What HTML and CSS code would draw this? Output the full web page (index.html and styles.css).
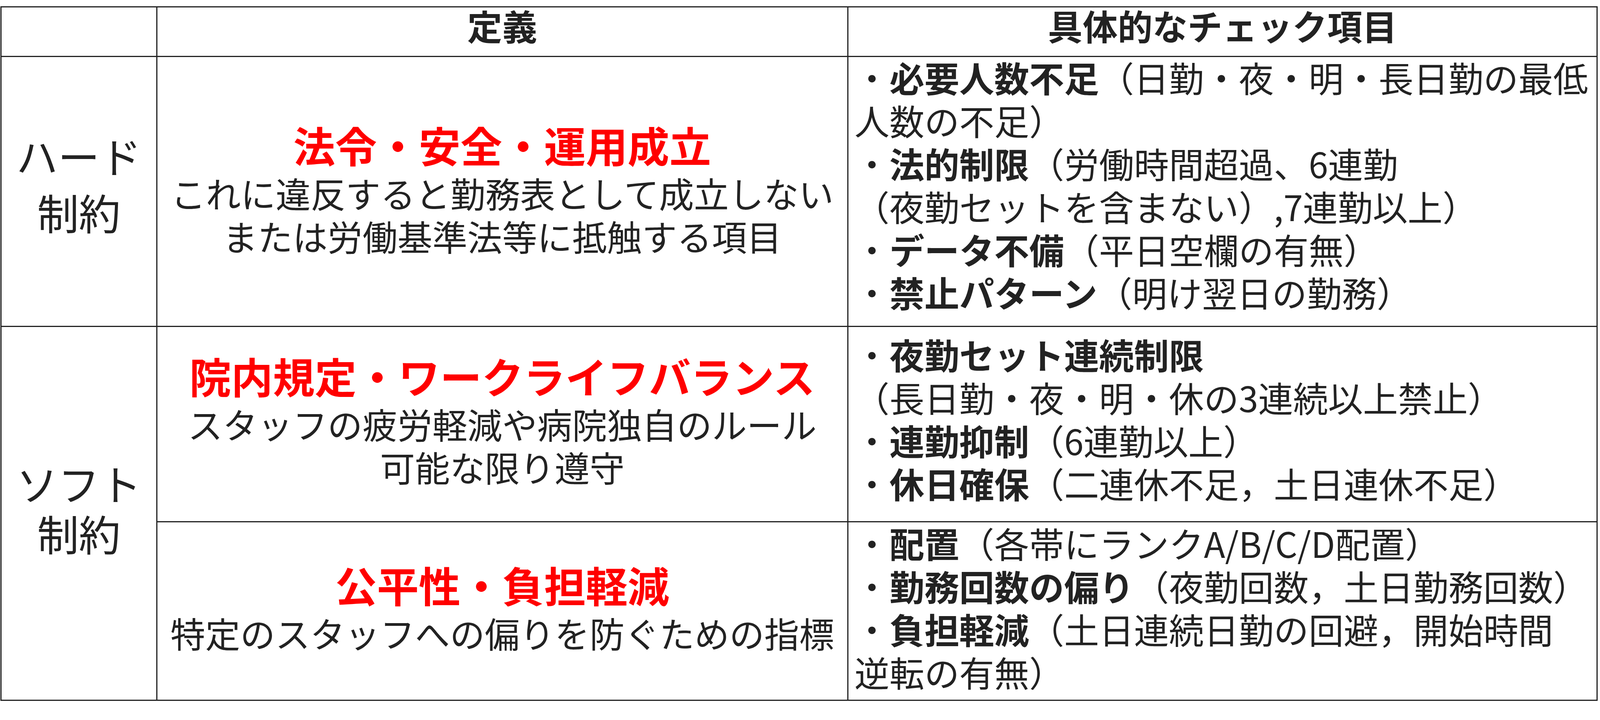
FILE: index.html
```html
<!DOCTYPE html>
<html lang="ja">
<head>
<meta charset="utf-8">
<title>制約一覧</title>
<link rel="stylesheet" href="styles.css">
</head>
<body>
<div class="grid">
  <div class="cell head"></div>
  <div class="cell head center"><span class="hd">定義</span></div>
  <div class="cell head center"><span class="hd">具体的なチェック項目</span></div>

  <div class="cell label hard"><span>ハード</span><span>制約</span></div>
  <div class="cell center def">
    <div class="red">法令・安全・運用成立</div>
    <div class="body">これに違反すると勤務表として成立しない</div>
    <div class="body">または労働基準法等に抵触する項目</div>
  </div>
  <div class="cell list">
    <div class="ln">・<b>必要人数不足</b>（日勤・夜・明・長日勤の最低</div>
    <div class="ln">人数の不足）</div>
    <div class="ln">・<b>法的制限</b>（労働時間超過、6連勤</div>
    <div class="ln">（夜勤セットを含まない）,7連勤以上）</div>
    <div class="ln">・<b>データ不備</b>（平日空欄の有無）</div>
    <div class="ln">・<b>禁止パターン</b>（明け翌日の勤務）</div>
  </div>

  <div class="cell label soft"><span>ソフト</span><span>制約</span></div>
  <div class="cell center def def-soft">
    <div class="red">院内規定・ワークライフバランス</div>
    <div class="body">スタッフの疲労軽減や病院独自のルール</div>
    <div class="body">可能な限り遵守</div>
  </div>
  <div class="cell list list-soft">
    <div class="ln">・<b>夜勤セット連続制限</b></div>
    <div class="ln">（長日勤・夜・明・休の3連続以上禁止）</div>
    <div class="ln">・<b>連勤抑制</b>（6連勤以上）</div>
    <div class="ln">・<b>休日確保</b>（二連休不足，土日連休不足）</div>
  </div>

  <div class="cell center def def-fair">
    <div class="red">公平性・負担軽減</div>
    <div class="body">特定のスタッフへの偏りを防ぐための指標</div>
  </div>
  <div class="cell list list-fair">
    <div class="ln">・<b>配置</b>（各帯にランクA/B/C/D配置）</div>
    <div class="ln">・<b>勤務回数の偏り</b>（夜勤回数，土日勤務回数）</div>
    <div class="ln">・<b>負担軽減</b>（土日連続日勤の回避，開始時間</div>
    <div class="ln">逆転の有無）</div>
  </div>
</div>
</body>
</html>
```

FILE: styles.css
```css
html, body {
  margin: 0;
  padding: 0;
  background: #ffffff;
}

body {
  font-family: "Noto Sans CJK JP", "Noto Sans", sans-serif;
  color: #222222;
}

/* 4213px wide reference: 92px = 2.1837vw, 110px = 2.611vw */
.grid {
  display: grid;
  grid-template-columns: 407fr 1817fr 1970fr;
  grid-template-rows: 124px 688px 497px 454px;
  gap: 3px;
  padding: 3px;
  background: #222222;
  margin: 16px 0 0 1px;
  box-sizing: border-box;
  width: calc(100vw - 7px);
}

.cell {
  background: #ffffff;
  display: flex;
  flex-direction: column;
  justify-content: center;
  min-width: 0;
}

.center {
  align-items: center;
  text-align: center;
}

.hd {
  font-size: 2.1837vw;
  font-weight: 700;
  line-height: 1;
  padding-bottom: 32px;
}

.label {
  align-items: center;
  font-size: 2.611vw;
  font-weight: 400;
}

.label.hard {
  line-height: 145px;
  padding-bottom: 42px;
}

.label.soft {
  grid-row: 3 / span 2;
  line-height: 128px;
  padding-bottom: 28px;
}

.def {
  padding-bottom: 20px;
}

.def-soft {
  padding-bottom: 30px;
}

.def-fair {
  padding-bottom: 26px;
}

.red {
  color: #ff0000;
  font-size: 2.611vw;
  font-weight: 700;
  line-height: 136px;
  white-space: nowrap;
}

.body {
  font-size: 2.1837vw;
  line-height: 110px;
  white-space: nowrap;
}

.list {
  align-items: flex-start;
  padding-left: 0.38vw;
  padding-bottom: 36px;
  font-size: 2.1837vw;
  line-height: 110px;
}

.list-soft {
  padding-bottom: 30px;
}

.list-fair {
  padding-bottom: 20px;
}

.ln {
  white-space: nowrap;
}

.ln b {
  font-weight: 700;
}
```
